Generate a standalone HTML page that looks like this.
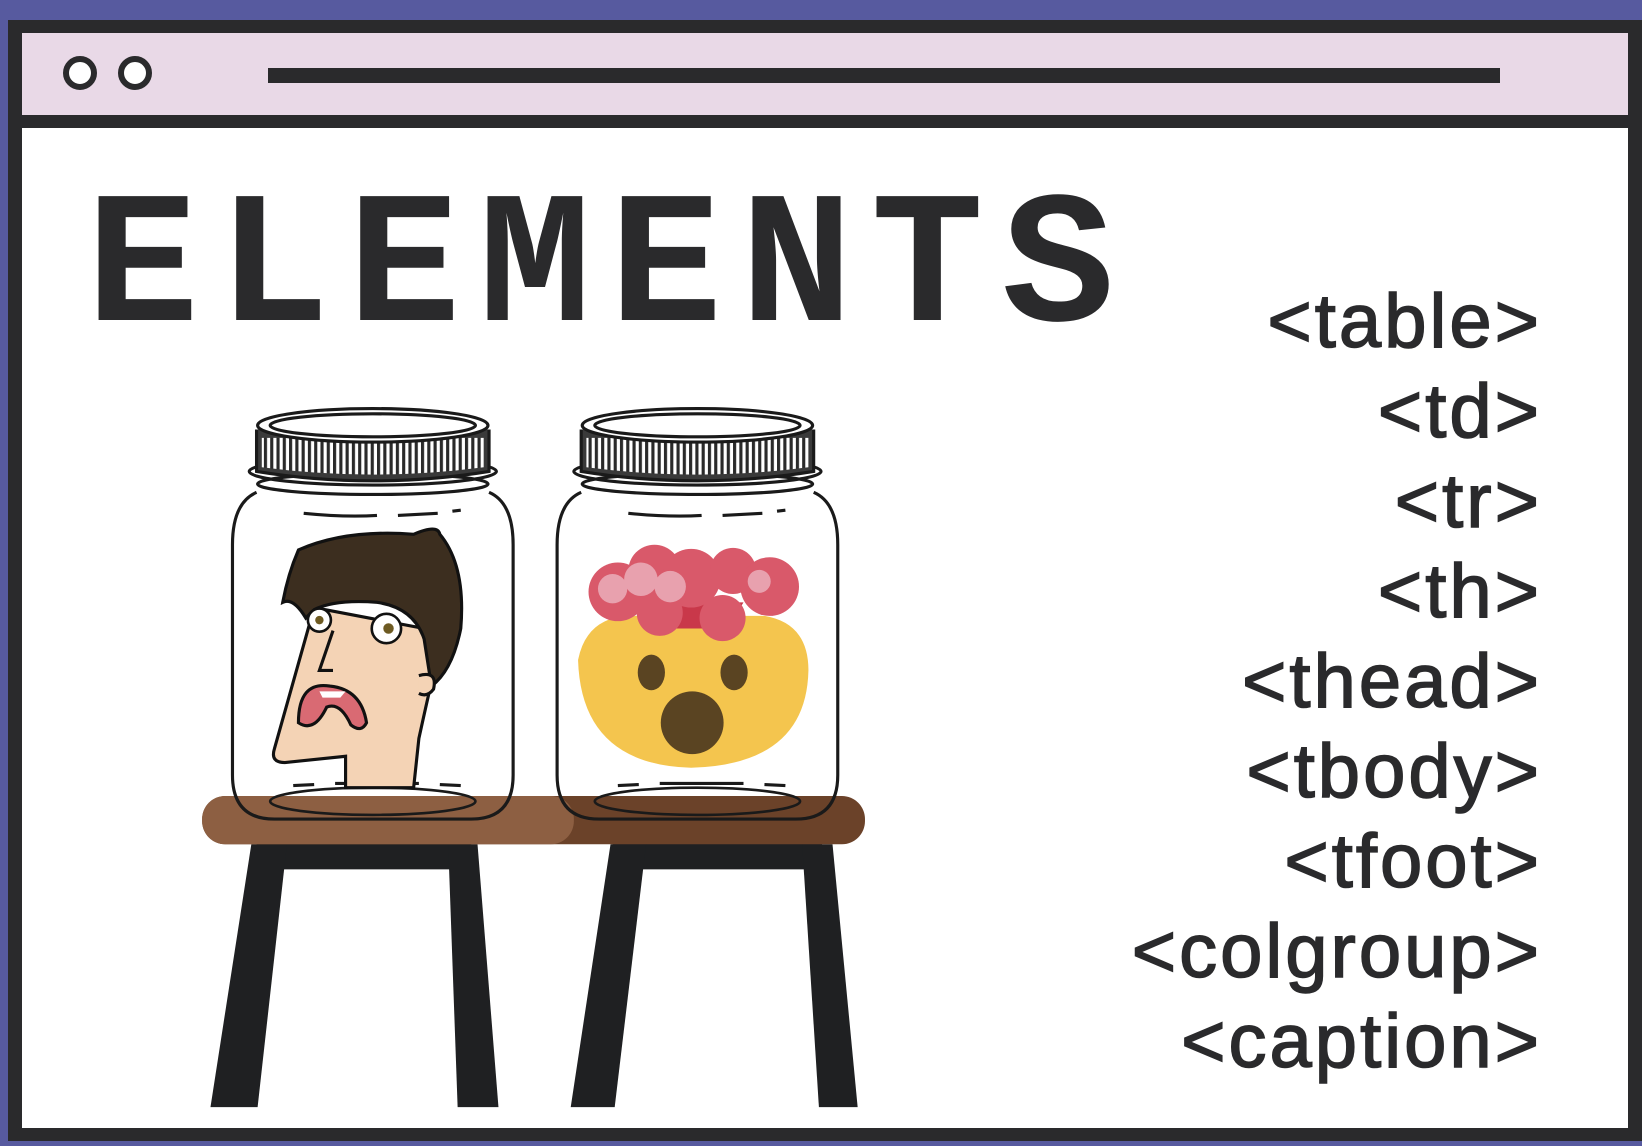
<!DOCTYPE html>
<html><head><meta charset="utf-8"><style>
html,body{margin:0;padding:0}
body{width:1642px;height:1146px;position:relative;overflow:hidden;background:#575a9f;font-family:"Liberation Sans",sans-serif}
.frame{position:absolute;left:8px;top:20px;width:1634px;height:1121px;background:#2a2a2c}
.bar{position:absolute;left:22px;top:33px;width:1606px;height:82px;background:#e9d9e7}
.main{position:absolute;left:22px;top:128px;width:1606px;height:1000px;background:#fff}
.dot{position:absolute;top:56px;width:22px;height:22px;border:6px solid #2a2a2c;border-radius:50%;background:#fff}
.line{position:absolute;left:268px;top:68px;width:1232px;height:15px;background:#2a2a2c}
h1{position:absolute;left:86px;top:177px;margin:0;font-family:"Liberation Mono",monospace;font-weight:bold;font-size:188px;letter-spacing:18px;color:#2a2a2c;line-height:1}
.tags{position:absolute;right:100px;top:0;text-align:right;color:#2a2a2c;font-size:76px;letter-spacing:3px;-webkit-text-stroke:1.5px #2a2a2c}
.tags div{position:absolute;right:0;white-space:nowrap;line-height:1}
</style></head><body>
<div class="frame"></div>
<div class="bar"></div>
<div class="main"></div>
<div class="dot" style="left:63px"></div>
<div class="dot" style="left:118px"></div>
<div class="line"></div>
<h1>ELEMENTS</h1>
<div class="tags">
<div style="top:284px">&lt;table&gt;</div>
<div style="top:374px">&lt;td&gt;</div>
<div style="top:464px">&lt;tr&gt;</div>
<div style="top:554px">&lt;th&gt;</div>
<div style="top:644px">&lt;thead&gt;</div>
<div style="top:734px">&lt;tbody&gt;</div>
<div style="top:824px">&lt;tfoot&gt;</div>
<div style="top:914px">&lt;colgroup&gt;</div>
<div style="top:1004px">&lt;caption&gt;</div>
</div>
<svg style="position:absolute;left:0;top:0" width="1642" height="1146" viewBox="0 0 1568 1094">
<g fill="#1f2022">
<rect x="245" y="800" width="205" height="30"/>
<polygon points="240,806 274,806 246,1057 201,1057"/>
<polygon points="428,806 456,806 476,1057 437,1057"/>
<rect x="585" y="800" width="200" height="30"/>
<polygon points="583,806 617,806 587,1057 545,1057"/>
<polygon points="766,806 795,806 819,1057 782,1057"/>
</g>
<rect x="193" y="760" width="633" height="46" rx="22" fill="#6b4229"/>
<rect x="193" y="760" width="355" height="46" rx="22" fill="#8d5f42"/>
<defs><pattern id="ribs" width="6" height="40" patternUnits="userSpaceOnUse"><rect width="6" height="40" fill="#fff"/><rect width="3" height="40" fill="#2a2a2a"/></pattern></defs>
<g id="jar" fill="none" stroke="#1a1a1a" stroke-width="3">
<path d="M245,470 Q222,480 222,520 L222,740 Q222,782 262,782 L450,782 Q490,782 490,740 L490,520 Q490,480 467,470"/>
<ellipse cx="356" cy="450" rx="118" ry="13" fill="#fff"/>
<ellipse cx="356" cy="462" rx="110" ry="10"/>
<path d="M245,410 L245,450 Q356,468 467,450 L467,410" fill="#3a3a3a"/>
<path d="M250,418 L462,418 L462,446 Q356,460 250,446 Z" fill="url(#ribs)" stroke="none"/>
<ellipse cx="356" cy="406" rx="110" ry="16" fill="#fff"/>
<ellipse cx="356" cy="406" rx="98" ry="11"/>
<path d="M290,490 Q330,494 360,492 M380,492 L418,490 M432,488 L440,487" stroke-width="3"/>
<ellipse cx="356" cy="765" rx="98" ry="13" stroke-width="2.5"/>
<path d="M280,750 L300,749 M320,748 L400,748 M420,749 L440,750" stroke-width="3"/>
</g>
<use href="#jar" x="310"/>
<path d="M300,580 L262,715 Q258,728 272,728 L330,722 L330,752 L395,752 L400,705 Q412,650 415,640 L405,600 Z" fill="#f4d3b5" stroke="#111" stroke-width="3"/>
<path d="M285,525 Q330,505 395,510 Q418,500 420,510 Q445,540 440,600 Q432,640 412,655 L405,610 Q395,580 360,575 Q320,572 300,582 L292,590 Q280,570 270,575 Q275,548 285,525Z" fill="#3c2e1f" stroke="#111" stroke-width="3"/>
<circle cx="305" cy="592" r="11" fill="#fff" stroke="#111" stroke-width="2.5"/><circle cx="305" cy="592" r="4" fill="#6d5a22"/>
<circle cx="369" cy="600" r="14" fill="#fff" stroke="#111" stroke-width="2.5"/><circle cx="371" cy="600" r="5" fill="#6d5a22"/>
<path d="M285,690 Q285,650 315,655 Q345,658 350,690 Q345,700 335,692 Q325,670 312,675 Q300,700 285,690Z" fill="#d96a73" stroke="#111" stroke-width="3"/>
<path d="M305,660 L330,660 L325,666 L308,666Z" fill="#fff"/>
<path d="M400,645 Q418,640 414,658 Q408,666 400,662" fill="#f4d3b5" stroke="#111" stroke-width="3"/>
<path d="M318,602 L305,640 L318,640" fill="none" stroke="#111" stroke-width="3"/>
<path d="M552,630 Q560,590 600,588 L730,588 Q772,595 772,640 Q770,730 660,733 Q555,730 552,630Z" fill="#f4c54e"/>
<path d="M630,600 L695,600 L710,575 L600,575 Z" fill="#c9384a"/>
<g fill="#d9596a"><circle cx="590" cy="565" r="28"/><circle cx="625" cy="545" r="25"/><circle cx="660" cy="552" r="28"/><circle cx="700" cy="545" r="22"/><circle cx="735" cy="560" r="28"/><circle cx="630" cy="585" r="22"/><circle cx="690" cy="590" r="22"/></g>
<g fill="#e8a1ae"><circle cx="585" cy="562" r="14"/><circle cx="612" cy="553" r="16"/><circle cx="640" cy="560" r="15"/><circle cx="725" cy="555" r="11"/></g>
<ellipse cx="622" cy="642" rx="13" ry="17" fill="#5a4422"/>
<ellipse cx="701" cy="642" rx="13" ry="17" fill="#5a4422"/>
<ellipse cx="661" cy="690" rx="30" ry="30" fill="#5a4422"/>
</svg>
</body></html>
